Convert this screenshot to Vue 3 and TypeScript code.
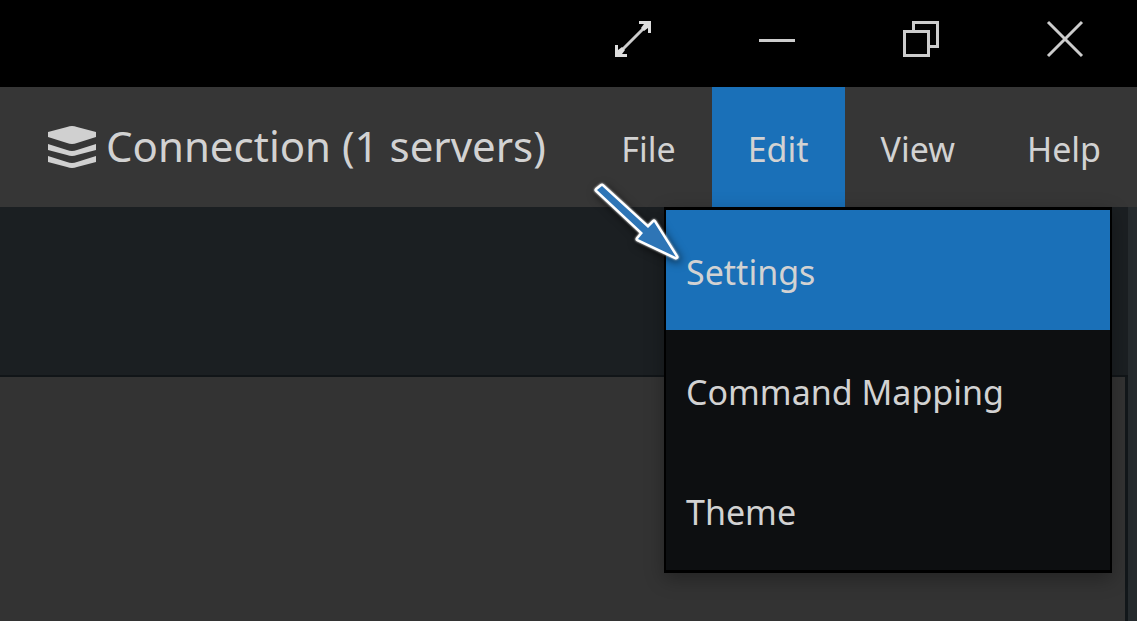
<script setup lang="ts">
import { ref } from 'vue'

const menus: string[] = ['File', 'Edit', 'View', 'Help']
const openMenu = ref<string>('Edit')
const commands: string[] = ['Settings', 'Command Mapping', 'Theme']
const activeCommand = ref<string>('Settings')
</script>

<template>
  <div class="window">
    <header class="titlebar">
      <button type="button" aria-label="Full screen">
        <svg viewBox="0 0 36 36">
          <path d="M4 32L32 4" stroke-width="3" />
          <path class="solid" d="M24 0H36V12H33V7L29 10L26 7L29 3H24ZM0 24H3V29L7 26L10 29L7 33H12V36H0Z" />
        </svg>
      </button>
      <button type="button" aria-label="Minimize">
        <svg viewBox="0 0 36 36"><path d="M0 19.5H36" stroke-width="3" /></svg>
      </button>
      <button type="button" aria-label="Restore">
        <svg viewBox="0 0 36 36">
          <path d="M1.5 10.5H25.5V34.5H1.5ZM10.5 10.5V1.5H34.5V25.5H25.5" stroke-width="3" />
        </svg>
      </button>
      <button type="button" aria-label="Close">
        <svg viewBox="0 0 36 36"><path d="M1 1L35 35M35 1L1 35" stroke-width="3" /></svg>
      </button>
    </header>

    <nav class="menubar">
      <button type="button" class="connection">
        <svg viewBox="0 0 50 44" aria-hidden="true">
          <path d="M1 7L20 2Q25 0 30 2L49 7V12L30 18Q25 20 20 18L1 12Z" />
          <path d="M1 19L20 25Q25 27 30 25L49 19V25L30 30Q25 32 20 30L1 25Z" />
          <path d="M1 31L20 37Q25 39 30 37L49 31V37L30 42Q25 44 20 42L1 37Z" />
        </svg>
        <span>Connection (1 servers)</span>
      </button>
      <div class="menus">
        <button
          v-for="menu in menus"
          :key="menu"
          type="button"
          class="menu"
          :class="{ open: menu === openMenu }"
          @click="openMenu = menu"
        >{{ menu }}</button>
      </div>
      <div class="dropdown" role="menu">
        <button
          v-for="command in commands"
          :key="command"
          type="button"
          role="menuitem"
          :class="{ active: command === activeCommand }"
          @mouseenter="activeCommand = command"
        >{{ command }}</button>
      </div>
      <svg class="pointer" viewBox="0 0 100 100" aria-hidden="true">
        <path class="halo" d="M12 20L17 16L63 58L69 52L91 87L53 69L58 63Z" />
        <path class="arrow" d="M12 20L17 16L63 58L69 52L91 87L53 69L58 63Z" />
      </svg>
    </nav>

    <main class="workspace">
      <div class="column">
        <div class="toolbar"></div>
        <div class="panel"></div>
      </div>
      <div class="gutter"></div>
    </main>
  </div>
</template>

<style>
body {
  margin: 0;
  background: #333333;
}
</style>

<style scoped>
.window {
  display: flex;
  flex-direction: column;
  min-height: 100vh;
  overflow: hidden;
  color: #d2d2d2;
  font-family: "Noto Sans", "Open Sans", sans-serif;
}
button {
  margin: 0;
  padding: 0;
  border: 0;
  background: none;
  color: inherit;
  font: inherit;
  white-space: nowrap;
}
.titlebar {
  display: flex;
  justify-content: flex-end;
  height: 87px;
  background: #000000;
}
.titlebar button {
  display: flex;
  align-items: center;
  justify-content: center;
  width: 144px;
  height: 78px;
}
.titlebar svg {
  width: 36px;
  height: 36px;
  overflow: visible;
  fill: none;
  stroke: #cccccc;
}
.titlebar .solid {
  fill: #dddddd;
  stroke: none;
}
.menubar {
  position: relative;
  display: flex;
  justify-content: space-between;
  height: 120px;
  padding-left: 47px;
  background: #363636;
}
.connection {
  display: flex;
  align-items: center;
  gap: 9px;
  font-size: 42px;
}
.connection span {
  padding-bottom: 4px;
}
.connection svg {
  width: 50px;
  height: 44px;
  fill: #d0d0d0;
}
.menus {
  display: flex;
}
.menu {
  padding: 4px 36px 0;
  font-size: 34px;
}
.menu.open {
  background: #1a70b8;
}
.dropdown {
  position: absolute;
  z-index: 1;
  top: 120px;
  right: 25px;
  display: flex;
  flex-direction: column;
  width: 444px;
  border: solid #000000;
  border-width: 3px 2px;
  background: #0d0f11;
  box-shadow: 0 6px 18px rgba(0, 0, 0, 0.3);
}
.dropdown button {
  height: 120px;
  padding: 4px 20px 0;
  font-size: 34px;
  text-align: left;
}
.dropdown .active {
  background: #1a70b8;
}
.pointer {
  position: absolute;
  z-index: 2;
  top: 83px;
  right: 452px;
  width: 100px;
  height: 100px;
  overflow: visible;
  pointer-events: none;
  filter: drop-shadow(0 0 1px #ffffff) drop-shadow(2px 3px 4px rgba(0, 0, 0, 0.6));
}
.halo {
  fill: #ffffff;
  stroke: #ffffff;
  stroke-width: 5;
  stroke-linejoin: round;
}
.arrow {
  fill: #2e75b6;
}
.workspace {
  display: flex;
  flex: 1;
}
.column {
  display: flex;
  flex: 1;
  flex-direction: column;
}
.toolbar {
  height: 168px;
  background: #1b1f22;
  border-bottom: 2px solid #111518;
}
.panel {
  flex: 1;
  background: #333333;
  border-right: 3px solid #12171a;
}
.gutter {
  width: 9px;
  background: #262b2e;
}
</style>
